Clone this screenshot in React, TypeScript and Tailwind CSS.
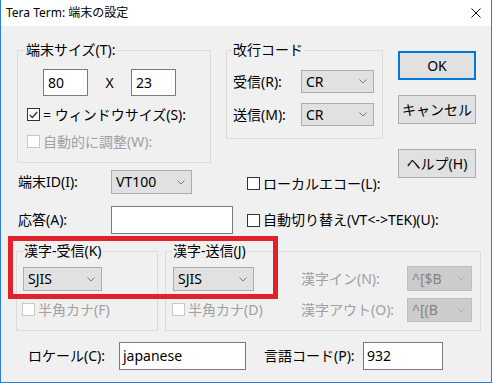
import type { ReactNode } from 'react';

const FONT = "font-['Noto_Sans','Noto_Sans_CJK_JP',sans-serif]";

function Chevron({ disabled = false }: { disabled?: boolean }) {
  return (
    <svg width="8" height="5" viewBox="0 0 8 5" className="shrink-0">
      <path d="M0.5 0.5 L4 4 L7.5 0.5" fill="none" stroke={disabled ? '#b4b4b4' : '#7a7a7a'} strokeWidth="1" />
    </svg>
  );
}

function Select({ value, className, disabled = false }: { value: string; className: string; disabled?: boolean }) {
  return (
    <div
      className={`shrink-0 flex items-center justify-between pl-[4px] pr-[6px] border ${
        disabled ? 'bg-[#cccccc] border-[#bfbfbf] text-[#838383]' : 'bg-[#e1e1e1] border-[#adadad] text-black'
      } ${className}`}
    >
      <span className="leading-none">{value}</span>
      <Chevron disabled={disabled} />
    </div>
  );
}

function TextBox({ value = '', className }: { value?: string; className: string }) {
  return (
    <div className={`shrink-0 flex items-center pl-[3px] bg-white border border-[#7a7a7a] ${className}`}>
      <span className="leading-none">{value}</span>
    </div>
  );
}

function Check({ checked = false, disabled = false, label }: { checked?: boolean; disabled?: boolean; label: string }) {
  return (
    <div className={`flex items-center h-[13px] whitespace-nowrap ${disabled ? 'text-[#a0a0a0]' : 'text-black'}`}>
      <div
        className={`w-[13px] h-[13px] border bg-white flex items-center justify-center shrink-0 ${
          disabled ? 'border-[#c8c8c8]' : 'border-[#333333]'
        }`}
      >
        {checked && (
          <svg width="9" height="8" viewBox="0 0 9 8">
            <path d="M0.8 4 L3.3 6.5 L8.2 1" fill="none" stroke="#333333" strokeWidth="1.3" />
          </svg>
        )}
      </div>
      <span className="ml-[3px] leading-none">{label}</span>
    </div>
  );
}

function Group({ label, labelPos, className, children }: { label: string; labelPos: string; className: string; children: ReactNode }) {
  return (
    <div className={`relative shrink-0 border border-[#dcdcdc] ${className}`}>
      <span className={`absolute top-[-10px] px-[1px] bg-[#f0f0f0] leading-[18px] whitespace-nowrap ${labelPos}`}>{label}</span>
      {children}
    </div>
  );
}

function Button({ label, primary = false }: { label: string; primary?: boolean }) {
  return (
    <div
      className={`w-[78px] h-[29px] flex items-center justify-center bg-[#e1e1e1] ${
        primary ? 'border-2 border-[#0078d7]' : 'border border-[#adadad]'
      }`}
    >
      <span className="leading-none">{label}</span>
    </div>
  );
}

export default function App() {
  return (
    <div className={`w-[492px] h-[383px] flex flex-col border-x border-b border-[#2a7fd4] text-[14px] text-black ${FONT}`}>
      <div className="h-[26px] shrink-0 bg-white flex items-center justify-between pl-[5px] pr-[10px]">
        <span className="text-[12px] leading-none">Tera Term: 端末の設定</span>
        <svg width="10" height="10" viewBox="0 0 10 10">
          <path d="M0.5 0.5 L9.5 9.5 M9.5 0.5 L0.5 9.5" stroke="#111" strokeWidth="1" />
        </svg>
      </div>

      <div className="relative flex-1 bg-[#f0f0f0] pl-[16px] pt-[24px]">
        <div className="flex items-start">
          <div className="w-[366px] shrink-0 flex flex-col">
            <div className="flex items-start">
              <Group label="端末サイズ(T):" labelPos="left-[7px]" className="w-[194px] h-[113px] pt-[18px]">
                <div className="flex items-center ml-[25px]">
                  <TextBox value="80" className="w-[45px] h-[27px] pl-[4px]" />
                  <span className="w-[43px] shrink-0 text-center leading-none">X</span>
                  <TextBox value="23" className="w-[45px] h-[27px] pl-[4px]" />
                </div>
                <div className="ml-[9px] mt-[12px]">
                  <Check checked label="= ウィンドウサイズ(S):" />
                </div>
                <div className="ml-[9px] mt-[14px]">
                  <Check disabled label="自動的に調整(W):" />
                </div>
              </Group>

              <Group label="改行コード" labelPos="left-[5px]" className="ml-[15px] w-[157px] h-[89px] pt-[19px] pl-[6px]">
                <div className="flex items-center">
                  <span className="w-[68px] shrink-0 leading-none">受信(R):</span>
                  <Select value="CR" className="w-[73px] h-[23px]" />
                </div>
                <div className="flex items-center mt-[10px]">
                  <span className="w-[68px] shrink-0 leading-none">送信(M):</span>
                  <Select value="CR" className="w-[73px] h-[23px]" />
                </div>
              </Group>
            </div>

            <div className="flex items-center mt-[7px] ml-[1px]">
              <span className="w-[93px] shrink-0 leading-none">端末ID(I):</span>
              <Select value="VT100" className="w-[81px] h-[24px]" />
              <div className="ml-[55px] mt-[3px] shrink-0">
                <Check label="ローカルエコー(L):" />
              </div>
            </div>

            <div className="flex items-center mt-[12px] ml-[1px]">
              <span className="w-[93px] shrink-0 leading-none">応答(A):</span>
              <TextBox className="w-[122px] h-[28px]" />
              <div className="ml-[14px] shrink-0">
                <Check label="自動切り替え(VT<->TEK)(U):" />
              </div>
            </div>
          </div>

          <div className="ml-[15px] shrink-0 flex flex-col">
            <div className="mt-[1px]">
              <Button label="OK" primary />
            </div>
            <div className="mt-[15px]">
              <Button label="キャンセル" />
            </div>
            <div className="mt-[25px]">
              <Button label="ヘルプ(H)" />
            </div>
          </div>
        </div>

        <div className="flex items-start mt-[17px] -ml-[1px]">
          <Group label="漢字-受信(K)" labelPos="left-[6px]" className="w-[142px] h-[80px] pt-[15px] pl-[6px]">
            <Select value="SJIS" className="w-[79px] h-[24px]" />
            <div className="mt-[12px] -ml-[1px]">
              <Check disabled label="半角カナ(F)" />
            </div>
          </Group>

          <Group label="漢字-送信(J)" labelPos="left-[6px]" className="ml-[7px] w-[316px] h-[80px] pt-[14px] pl-[7px]">
            <div className="flex items-start">
              <div className="w-[81px] shrink-0 flex flex-col">
                <div className="mt-[1px]">
                  <Select value="SJIS" className="w-[81px] h-[24px]" />
                </div>
                <div className="mt-[12px] -ml-[1px]">
                  <Check disabled label="半角カナ(D)" />
                </div>
              </div>
              <div className="ml-[47px] shrink-0 flex flex-col text-[#a0a0a0]">
                <div className="flex items-center">
                  <span className="w-[106px] shrink-0 leading-none">漢字イン(N):</span>
                  <Select disabled value="^[$B" className="w-[65px] h-[25px]" />
                </div>
                <div className="flex items-center mt-[7px]">
                  <span className="w-[106px] shrink-0 leading-none">漢字アウト(O):</span>
                  <Select disabled value="^[(B" className="w-[65px] h-[24px]" />
                </div>
              </div>
            </div>
          </Group>
        </div>

        <div className="flex items-center mt-[11px] ml-[11px]">
          <span className="w-[91px] shrink-0 leading-none">ロケール(C):</span>
          <TextBox value="japanese" className="w-[127px] h-[28px]" />
          <span className="ml-[18px] w-[99px] shrink-0 leading-none">言語コード(P):</span>
          <TextBox value="932" className="w-[80px] h-[28px]" />
        </div>

        <div className="absolute left-[7px] top-[210px] w-[270px] h-[63px] border-[5px] border-[#e3212b]" />
      </div>
    </div>
  );
}
